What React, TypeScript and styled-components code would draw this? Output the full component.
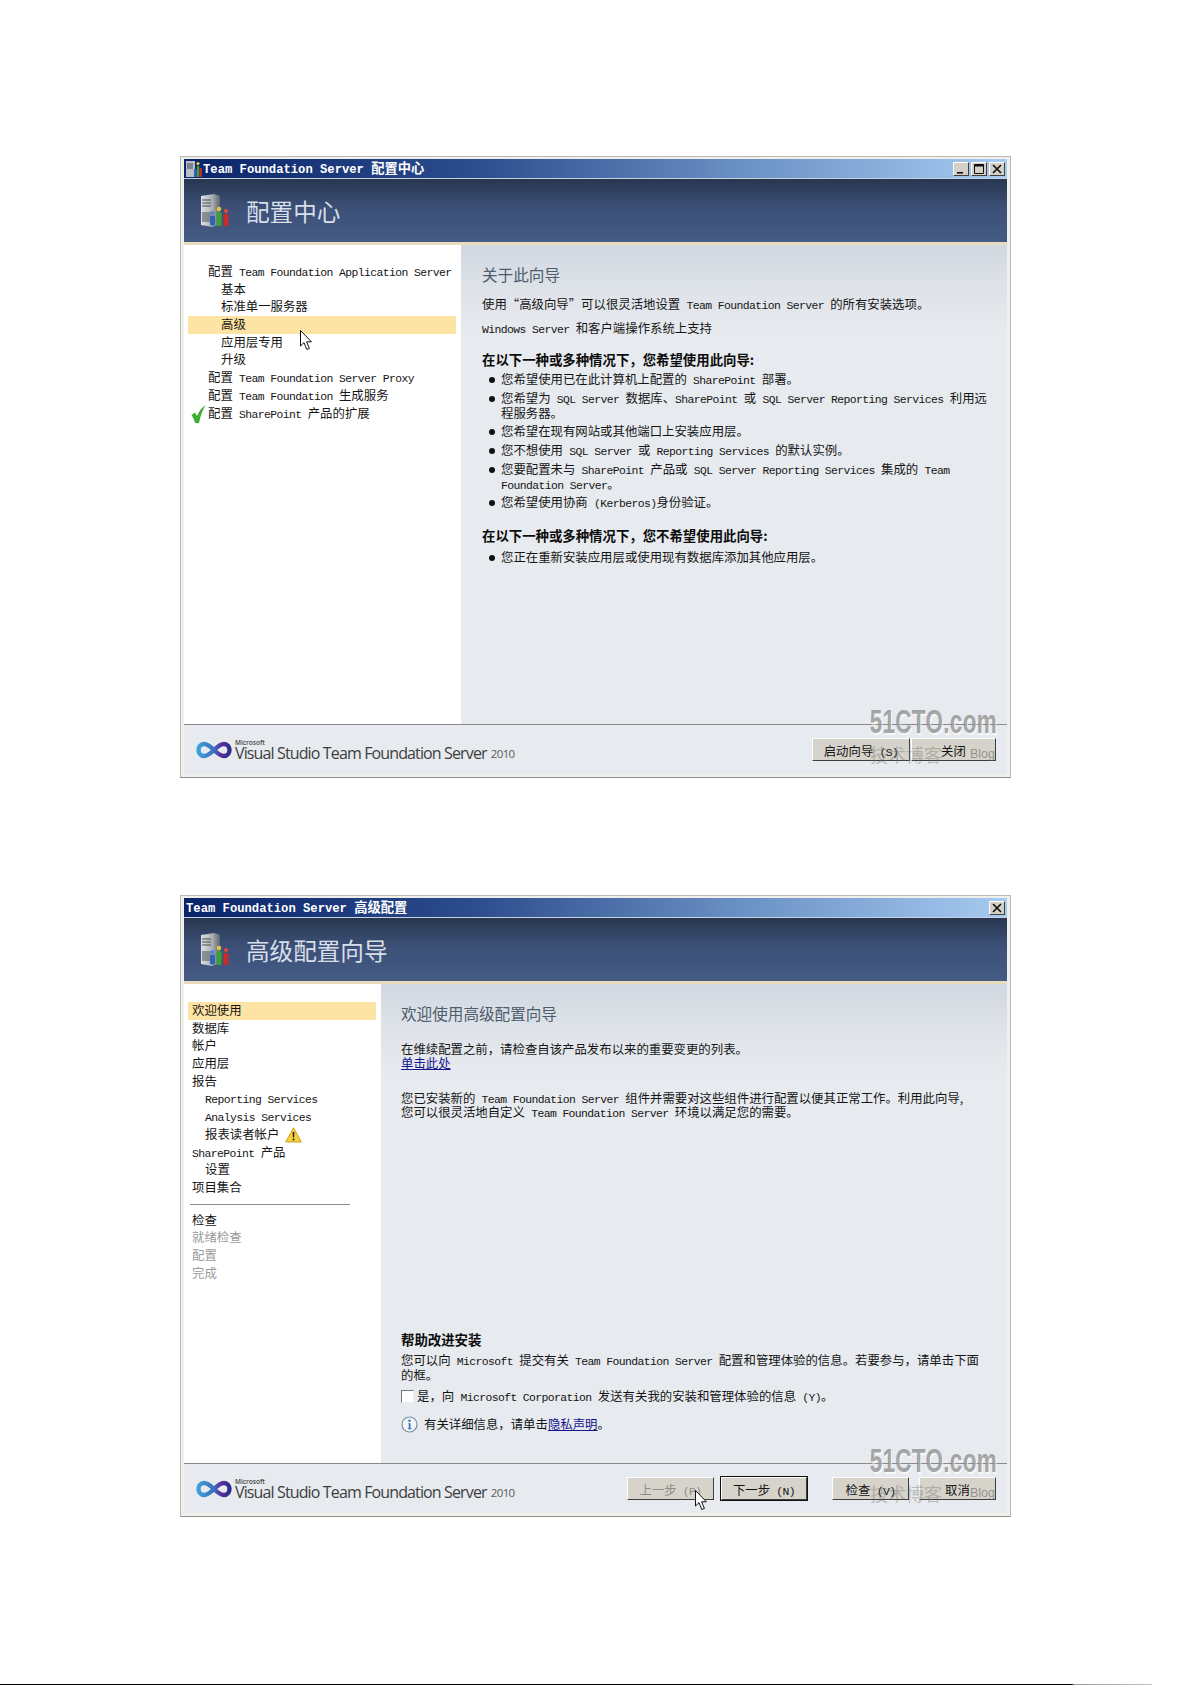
import React from 'react';
import styled, { createGlobalStyle } from 'styled-components';

const GlobalStyle = createGlobalStyle`
  html, body {
    margin: 0;
    padding: 0;
    background: #fff;
  }
  body {
    font-family: "Noto Sans CJK SC", "Liberation Sans", sans-serif;
    font-size: 12.4px;
    color: #151515;
  }
`;

const Page = styled.div`
  width: 1192px;
  height: 1685px;
  box-sizing: border-box;
  padding: 156px 0 0 180px;
  display: flex;
  flex-direction: column;
  gap: 117px;
  position: relative;
  overflow: hidden;
`;

const PageRule = styled.div`
  position: absolute;
  left: 0;
  bottom: 0;
  width: 1152px;
  height: 1px;
  background: linear-gradient(90deg, #000 0, #000 1072px, #9a9a9a 1074px, #c4c4c4 100%);
`;

const Window = styled.section`
  position: relative;
  width: 831px;
  height: 622px;
  box-sizing: border-box;
  padding: 2px 3px 3px;
  background: #f0efe9;
  border: 1px solid #b9b9b5;
  border-bottom-color: #8f8f8c;
  display: flex;
  flex-direction: column;
`;

const TitleBar = styled.header`
  height: 19px;
  flex: none;
  display: flex;
  align-items: center;
  gap: 1px;
  padding: 0 2px 0 2px;
  background: linear-gradient(90deg, #0a246a 0%, #2c4c8c 35%, #6f95c8 70%, #a6caf0 100%);
  border-bottom: 1px solid #c6d2e2;
`;

const TitleText = styled.h1`
  flex: 1;
  margin: 0;
  font-size: 13.3px;
  font-weight: 700;
  line-height: 17px;
  padding-bottom: 2px;
  color: #fff;
  white-space: pre;
`;

const TitleLatin = styled.span`
  font-family: "Liberation Mono", monospace;
  font-size: 12.2px;
  font-weight: 700;
  line-height: 0;
`;

const Controls = styled.div`
  display: flex;
  gap: 2px;
`;

const ControlButton = styled.span`
  width: 16px;
  height: 14px;
  display: flex;
  align-items: center;
  justify-content: center;
  background: #d4d0c8;
  border: 1px solid;
  box-sizing: border-box;
  border-color: #fff #404040 #404040 #fff;
`;

const Banner = styled.div`
  height: 63px;
  flex: none;
  display: flex;
  align-items: center;
  gap: 16px;
  padding-left: 16px;
  background: linear-gradient(180deg, #28374f 0%, #3c5077 45%, #445b85 100%);
  border-bottom: 3px solid #e8dcbd;
`;

const BannerTitle = styled.h2`
  margin: 0;
  font-size: 23.6px;
  font-weight: 400;
  line-height: 30px;
  color: #d8dfe9;
`;

const Body = styled.div<{ $side: number }>`
  height: 479px;
  flex: none;
  display: grid;
  grid-template-columns: ${(p) => p.$side}px 1fr;
`;

const Nav = styled.nav<{ $top: number }>`
  background: #fff;
  padding: ${(p) => p.$top}px 5px 0 4px;
`;

const NavRow = styled.div<{ $indent: number; $selected?: boolean; $muted?: boolean }>`
  position: relative;
  height: 17.7px;
  line-height: 17.7px;
  padding-left: ${(p) => p.$indent}px;
  white-space: pre;
  display: flex;
  align-items: center;
  gap: 6px;
  background: ${(p) => (p.$selected ? '#fde3a4' : 'transparent')};
  color: ${(p) => (p.$muted ? '#9a9a9a' : '#151515')};
`;

const RowMark = styled.span`
  position: absolute;
  left: 3px;
  top: 0;
  line-height: 0;
`;

const NavDivider = styled.hr`
  width: 160px;
  height: 1px;
  margin: 7px 0 7px 2px;
  border: 0;
  background: #8d8d8d;
`;

const Content = styled.div<{ $top: number; $left: number }>`
  display: flex;
  flex-direction: column;
  padding: ${(p) => p.$top}px 12px 30px ${(p) => p.$left}px;
  background: linear-gradient(180deg, #d2d8e1 0, #e0e4ea 50px, #e7eaee 90px);
  line-height: 15px;
`;

const SectionTitle = styled.h3`
  margin: 0;
  font-size: 15.6px;
  font-weight: 400;
  line-height: 20px;
  color: #4c5c6c;
  white-space: pre;
`;

const Para = styled.p<{ $top: number; $tight?: boolean }>`
  margin: ${(p) => p.$top}px 0 0;
  line-height: ${(p) => (p.$tight ? '14.4px' : '15px')};
  white-space: pre;
`;

const Lead = styled.h4<{ $top: number }>`
  margin: ${(p) => p.$top}px 0 3px;
  font-size: 13.4px;
  line-height: 12px;
  font-weight: 700;
  color: #0c0c0c;
  white-space: pre;
`;

const Bullets = styled.ul<{ $top: number }>`
  list-style: none;
  margin: ${(p) => p.$top}px 0 0;
  padding: 0 0 0 19px;
  display: flex;
  flex-direction: column;
  gap: 3.7px;
`;

const Bullet = styled.li`
  position: relative;
  white-space: pre;

  &::before {
    content: '';
    position: absolute;
    left: -12px;
    top: 5px;
    width: 6px;
    height: 6px;
    border-radius: 50%;
    background: #111;
  }
`;

const Link = styled.a`
  color: #14148c;
  text-decoration: underline;
`;

const HelpBlock = styled.div`
  margin-top: auto;
  display: flex;
  flex-direction: column;
`;

const CheckRow = styled.div`
  margin-top: 6px;
  display: flex;
  align-items: center;
  gap: 3px;
  white-space: pre;
`;

const CheckBox = styled.span`
  width: 13px;
  height: 13px;
  box-sizing: border-box;
  flex: none;
  background: #fff;
  border: 1px solid;
  border-color: #777 #eee #eee #777;
`;

const InfoRow = styled.div`
  margin-top: 12px;
  display: flex;
  align-items: center;
  gap: 6px;
  white-space: pre;
`;

const Footer = styled.footer`
  flex: 1;
  display: flex;
  align-items: center;
  justify-content: space-between;
  padding: 0 11px 0 12px;
  background: #e7eaee;
  border-top: 1px solid #8a8a88;
`;

const Brand = styled.div`
  position: relative;
  display: flex;
  align-items: center;
  gap: 3px;
`;

const BrandName = styled.span`
  padding-top: 6px;
  font-family: "Open Sans", "Liberation Sans", sans-serif;
  font-size: 16px;
  letter-spacing: -0.87px;
  color: #3e3e3e;
  white-space: pre;
`;

const BrandYear = styled.span`
  font-family: "Open Sans", "Liberation Sans", sans-serif;
  font-size: 11.5px;
  letter-spacing: -0.6px;
  color: #5a5a5a;
  margin-left: 1px;
  align-self: flex-end;
  padding-bottom: 3px;
`;

const BrandMaker = styled.span`
  position: absolute;
  left: 39px;
  top: 2px;
  font-family: "Open Sans", "Liberation Sans", sans-serif;
  font-size: 6.5px;
  font-weight: 600;
  color: #444;
`;

const ButtonRow = styled.div`
  display: flex;
  gap: 25px;
`;

const ButtonGroup = styled.div<{ $gap: number }>`
  display: flex;
  gap: ${(p) => p.$gap}px;
`;

const Button = styled.button<{ $width: number; $primary?: boolean }>`
  width: ${(p) => p.$width}px;
  height: 23px;
  padding: 2px 0 0;
  font: inherit;
  line-height: 18px;
  color: ${(p) => (p.disabled ? '#8e8c84' : '#151515')};
  background: #d6d3cb;
  border: 1px solid;
  border-color: #fff #3e3e3e #3e3e3e #fff;
  box-shadow: ${(p) => (p.$primary ? '0 0 0 1px #111' : 'none')};
  white-space: pre;
`;

const WatermarkSite = styled.div`
  position: absolute;
  right: 13px;
  bottom: 35px;
  font-family: "Liberation Sans", sans-serif;
  font-size: 22.5px;
  font-weight: 700;
  line-height: 26px;
  letter-spacing: 0.3px;
  color: rgba(120, 120, 120, 0.65);
  text-shadow: 1px 1px 0 rgba(255, 255, 255, 0.7);
  transform: scaleY(1.45);
  transform-origin: right bottom;
  pointer-events: none;
`;

const WatermarkBlog = styled.div`
  position: absolute;
  right: 15px;
  bottom: 11px;
  display: flex;
  align-items: center;
  gap: 28px;
  font-size: 18px;
  line-height: 24px;
  color: rgba(110, 110, 110, 0.4);
  pointer-events: none;
`;

const WatermarkBlogLatin = styled.span`
  font-family: "Liberation Sans", sans-serif;
  font-size: 12.5px;
  color: rgba(100, 100, 100, 0.6);
`;

const Pointer = styled.svg<{ $x: number; $y: number }>`
  position: absolute;
  left: ${(p) => p.$x}px;
  top: ${(p) => p.$y}px;
  pointer-events: none;
`;

const Latin = styled.span`
  font-family: "Liberation Mono", monospace;
  font-size: 11.4px;
  letter-spacing: -0.59px;
  line-height: 0;
`;

const Mixed: React.FC<{ text: string; latin?: React.ElementType }> = ({ text, latin }) => {
  const Run = latin || Latin;
  return (
    <>
      {text.split(/( ?[A-Za-z()][A-Za-z() ]*)/).map((part, i) =>
        i % 2 ? <Run key={i}>{part}</Run> : <React.Fragment key={i}>{part}</React.Fragment>
      )}
    </>
  );
};

const ServerIcon = () => (
  <svg width="30" height="34" viewBox="0 0 30 34">
    <defs>
      <linearGradient id="tower" x1="0" x2="1" y1="0" y2="0">
        <stop offset="0" stopColor="#dfe2e4" />
        <stop offset="0.6" stopColor="#a9adb1" />
        <stop offset="1" stopColor="#5f666e" />
      </linearGradient>
    </defs>
    <path d="M1 2 L14 0 L20 2 L20 30 L12 33 L1 31 Z" fill="url(#tower)" />
    <path d="M2 6h9M2 9h9M2 12h9" stroke="#4a4f55" strokeWidth="1.2" />
    <path d="M2 18h9v10H2z" fill="#777d83" opacity="0.8" />
    <circle cx="12.5" cy="19" r="2" fill="#4f86d8" />
    <rect x="10" y="21.5" width="5" height="10" rx="1.5" fill="#2f62b8" />
    <circle cx="19" cy="15" r="2.2" fill="#e9c93a" />
    <rect x="16.5" y="18" width="5" height="14" rx="1.5" fill="#3f9e3a" />
    <circle cx="26" cy="17" r="2" fill="#e24a3a" />
    <rect x="23.5" y="20" width="5" height="12" rx="1.5" fill="#c92a2a" />
  </svg>
);

const AppIcon = () => (
  <svg width="16" height="18" viewBox="0 0 16 18">
    <rect x="0" y="1" width="9" height="16" fill="#b8bec6" />
    <path d="M1 4h6M1 6h6M1 8h6" stroke="#454a55" />
    <rect x="8" y="9" width="2.6" height="8" fill="#2f62b8" />
    <rect x="10.8" y="6" width="2.4" height="11" fill="#3f9e3a" />
    <rect x="13.4" y="8" width="2.4" height="9" fill="#c92a2a" />
    <circle cx="12" cy="3.6" r="1.6" fill="#e9c93a" />
  </svg>
);

const MinIcon = () => (
  <svg width="10" height="10" viewBox="0 0 10 10">
    <path d="M1 8h6v1.6H1z" fill="#111" />
  </svg>
);

const MaxIcon = () => (
  <svg width="10" height="10" viewBox="0 0 10 10" fill="none" stroke="#111">
    <path d="M.5.5h9v9h-9z" />
    <path d="M0 1.5h10" strokeWidth="2" />
  </svg>
);

const CloseIcon = () => (
  <svg width="10" height="10" viewBox="0 0 10 10" stroke="#111" strokeWidth="1.7">
    <path d="M1 1l8 8M9 1l-8 8" />
  </svg>
);

const CheckMark = () => (
  <svg width="15" height="18" viewBox="0 0 15 18">
    <path d="M.5 10 L4 7.5 L6 11 C8 6.5 10.5 2.5 14.5 0 C11.5 5 9.5 11 8 18 L4.2 18 C3.2 15 2 12 .5 10Z" fill="#3eae2e" />
  </svg>
);

const WarningIcon = () => (
  <svg width="17" height="16" viewBox="0 0 17 16">
    <path d="M8.5 .8 L16.4 15 H.6 Z" fill="#f5d23c" stroke="#c9a227" strokeLinejoin="round" />
    <path d="M7.6 5h1.8l-.3 5.6h-1.2z" fill="#222" />
    <circle cx="8.5" cy="12.6" r="1" fill="#222" />
  </svg>
);

const InfoIcon = () => (
  <svg width="17" height="17" viewBox="0 0 17 17">
    <circle cx="8.5" cy="8.5" r="7.5" fill="#f2f6fb" stroke="#7d8da0" strokeWidth="1.2" />
    <circle cx="8.5" cy="4.8" r="1.2" fill="#2a6fc0" />
    <path d="M7.2 7.2h2.3v5h1v1H6.8v-1h1v-4h-.6z" fill="#2a6fc0" />
  </svg>
);

const InfinityLogo = () => (
  <svg width="36" height="18" viewBox="0 0 36 18" fill="none">
    <defs>
      <linearGradient id="loop" x1="0" x2="1" y1="0" y2="0">
        <stop offset="0" stopColor="#3d9fd8" />
        <stop offset="0.5" stopColor="#3d6fc0" />
        <stop offset="0.72" stopColor="#5b2f9e" />
        <stop offset="1" stopColor="#2c2f8c" />
      </linearGradient>
    </defs>
    <path
      d="M18 9 C14 5 11 3 8 3 C4.5 3 2.5 6 2.5 9 C2.5 12 4.5 15 8 15 C12 15 15 12 18 9 C21 6 24 3 28 3 C31.5 3 33.5 6 33.5 9 C33.5 12 31.5 15 28 15 C24 15 21 12 18 9Z"
      stroke="url(#loop)"
      strokeWidth="4.4"
    />
  </svg>
);

const CursorShape = () => (
  <path
    d="M.5.5 V16 L4 12.6 L6.8 19.5 L9.4 18.4 L6.6 11.8 H11.4 Z"
    fill="#fff"
    stroke="#111"
    strokeWidth="1"
    strokeLinejoin="round"
  />
);

const Watermark = () => (
  <>
    <WatermarkSite>51CTO.com</WatermarkSite>
    <WatermarkBlog>
      技术博客
      <WatermarkBlogLatin>Blog</WatermarkBlogLatin>
    </WatermarkBlog>
  </>
);

const BrandMark = () => (
  <Brand>
    <InfinityLogo />
    <BrandMaker>Microsoft</BrandMaker>
    <BrandName>Visual Studio Team Foundation Server</BrandName>
    <BrandYear>2010</BrandYear>
  </Brand>
);

const configItems = [
  { text: '配置 Team Foundation Application Server', indent: 20 },
  { text: '基本', indent: 33 },
  { text: '标准单一服务器', indent: 33 },
  { text: '高级', indent: 33, selected: true },
  { text: '应用层专用', indent: 33 },
  { text: '升级', indent: 33 },
  { text: '配置 Team Foundation Server Proxy', indent: 20 },
  { text: '配置 Team Foundation 生成服务', indent: 20 },
  { text: '配置 SharePoint 产品的扩展', indent: 20, done: true },
];

const wantItems = [
  '您希望使用已在此计算机上配置的 SharePoint 部署。',
  '您希望为 SQL Server 数据库、SharePoint 或 SQL Server Reporting Services 利用远\n程服务器。',
  '您希望在现有网站或其他端口上安装应用层。',
  '您不想使用 SQL Server 或 Reporting Services 的默认实例。',
  '您要配置未与 SharePoint 产品或 SQL Server Reporting Services 集成的 Team\nFoundation Server。',
  '您希望使用协商 (Kerberos)身份验证。',
];

const wizardSteps = [
  { text: '欢迎使用', indent: 4, selected: true },
  { text: '数据库', indent: 4 },
  { text: '帐户', indent: 4 },
  { text: '应用层', indent: 4 },
  { text: '报告', indent: 4 },
  { text: 'Reporting Services', indent: 17 },
  { text: 'Analysis Services', indent: 17 },
  { text: '报表读者帐户', indent: 17, warning: true },
  { text: 'SharePoint 产品', indent: 4 },
  { text: '设置', indent: 17 },
  { text: '项目集合', indent: 4 },
];

const wizardTail = [
  { text: '检查', muted: false },
  { text: '就绪检查', muted: true },
  { text: '配置', muted: true },
  { text: '完成', muted: true },
];

const App: React.FC = () => (
  <Page>
    <GlobalStyle />

    <Window>
      <TitleBar>
        <AppIcon />
        <TitleText>
          <Mixed text="Team Foundation Server 配置中心" latin={TitleLatin} />
        </TitleText>
        <Controls>
          <ControlButton><MinIcon /></ControlButton>
          <ControlButton><MaxIcon /></ControlButton>
          <ControlButton><CloseIcon /></ControlButton>
        </Controls>
      </TitleBar>
      <Banner>
        <ServerIcon />
        <BannerTitle>配置中心</BannerTitle>
      </Banner>
      <Body $side={277}>
        <Nav $top={18}>
          {configItems.map((item) => (
            <NavRow key={item.text} $indent={item.indent} $selected={item.selected}>
              {item.done && <RowMark><CheckMark /></RowMark>}
              <span><Mixed text={item.text} /></span>
            </NavRow>
          ))}
        </Nav>
        <Content $top={19} $left={21}>
          <SectionTitle>关于此向导</SectionTitle>
          <Para $top={13}><Mixed text="使用“高级向导”可以很灵活地设置 Team Foundation Server 的所有安装选项。" /></Para>
          <Para $top={9}><Mixed text="Windows Server 和客户端操作系统上支持" /></Para>
          <Lead $top={17}>在以下一种或多种情况下，您希望使用此向导:</Lead>
          <Bullets $top={4}>
            {wantItems.map((item) => (
              <Bullet key={item}><Mixed text={item} /></Bullet>
            ))}
          </Bullets>
          <Lead $top={19}>在以下一种或多种情况下，您不希望使用此向导:</Lead>
          <Bullets $top={6}>
            <Bullet>您正在重新安装应用层或使用现有数据库添加其他应用层。</Bullet>
          </Bullets>
        </Content>
      </Body>
      <Footer>
        <BrandMark />
        <ButtonGroup $gap={1}>
          <Button $width={98}><Mixed text="启动向导 (S)" /></Button>
          <Button $width={85}>关闭</Button>
        </ButtonGroup>
      </Footer>
      <Watermark />
      <Pointer $x={119} $y={173} width="13" height="22" viewBox="0 0 13 22">
        <CursorShape />
      </Pointer>
    </Window>

    <Window>
      <TitleBar>
        <TitleText>
          <Mixed text="Team Foundation Server 高级配置" latin={TitleLatin} />
        </TitleText>
        <Controls>
          <ControlButton><CloseIcon /></ControlButton>
        </Controls>
      </TitleBar>
      <Banner>
        <ServerIcon />
        <BannerTitle>高级配置向导</BannerTitle>
      </Banner>
      <Body $side={197}>
        <Nav $top={18}>
          {wizardSteps.map((step) => (
            <NavRow key={step.text} $indent={step.indent} $selected={step.selected}>
              <span><Mixed text={step.text} /></span>
              {step.warning && <WarningIcon />}
            </NavRow>
          ))}
          <NavDivider />
          {wizardTail.map((step) => (
            <NavRow key={step.text} $indent={4} $muted={step.muted}>{step.text}</NavRow>
          ))}
        </Nav>
        <Content $top={19} $left={20}>
          <SectionTitle>欢迎使用高级配置向导</SectionTitle>
          <Para $top={19} $tight>
            在维续配置之前，请检查自该产品发布以来的重要变更的列表。{'\n'}
            <Link>单击此处</Link>
          </Para>
          <Para $top={20} $tight>
            <Mixed text={'您已安装新的 Team Foundation Server 组件并需要对这些组件进行配置以便其正常工作。利用此向导,\n您可以很灵活地自定义 Team Foundation Server 环境以满足您的需要。'} />
          </Para>
          <HelpBlock>
            <Lead $top={0}>帮助改进安装</Lead>
            <Para $top={5}>
              <Mixed text={'您可以向 Microsoft 提交有关 Team Foundation Server 配置和管理体验的信息。若要参与，请单击下面\n的框。'} />
            </Para>
            <CheckRow>
              <CheckBox />
              <span><Mixed text="是，向 Microsoft Corporation 发送有关我的安装和管理体验的信息 (Y)。" /></span>
            </CheckRow>
            <InfoRow>
              <InfoIcon />
              <span>有关详细信息，请单击<Link>隐私声明</Link>。</span>
            </InfoRow>
          </HelpBlock>
        </Content>
      </Body>
      <Footer>
        <BrandMark />
        <ButtonRow>
          <ButtonGroup $gap={7}>
            <Button $width={87} disabled><Mixed text="上一步 (P)" /></Button>
            <Button $width={86} $primary><Mixed text="下一步 (N)" /></Button>
          </ButtonGroup>
          <ButtonGroup $gap={10}>
            <Button $width={77}><Mixed text="检查 (V)" /></Button>
            <Button $width={77}>取消</Button>
          </ButtonGroup>
        </ButtonRow>
      </Footer>
      <Watermark />
      <Pointer $x={514} $y={594} width="13" height="22" viewBox="0 0 13 22">
        <CursorShape />
      </Pointer>
    </Window>

    <PageRule />
  </Page>
);

export default App;
